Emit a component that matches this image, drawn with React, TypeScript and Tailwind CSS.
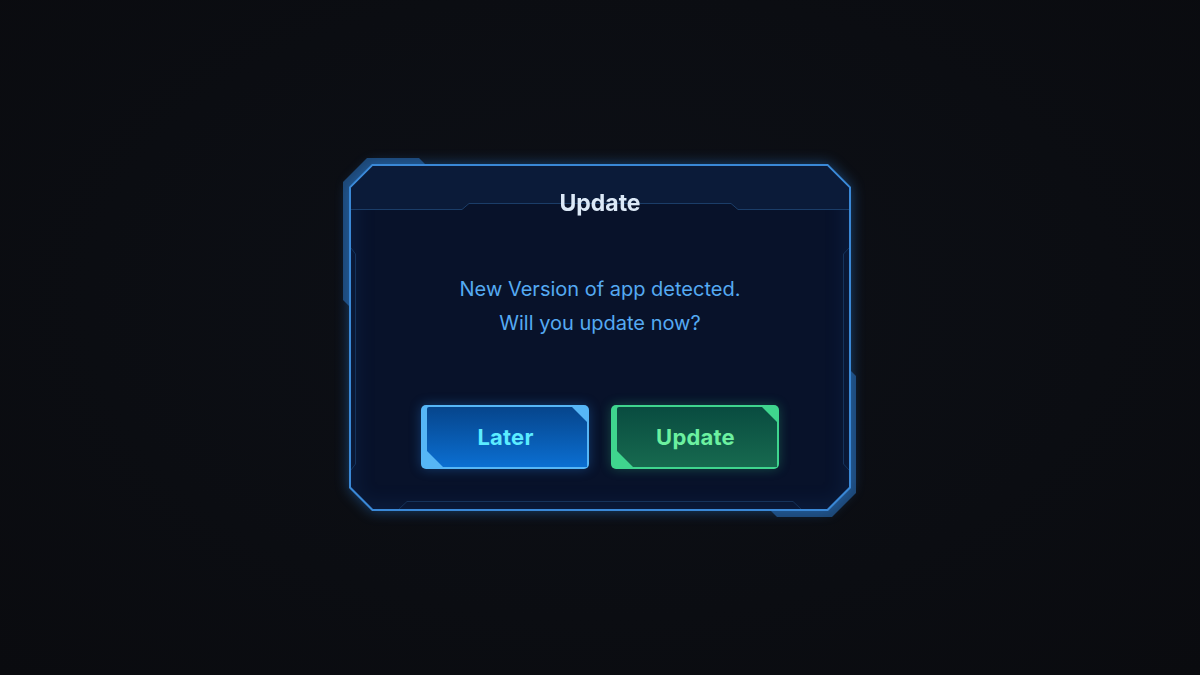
import React from "react";

const font = { fontFamily: "Inter, 'Noto Sans', sans-serif" };

interface FrameButtonProps {
    label: string;
    variant: "blue" | "green";
}

// Chamfered game-style button: accent shell with a clipped gradient fill on top
function FrameButton({ label, variant }: FrameButtonProps) {
    const blue = variant === "blue";
    return (
        <button
            className={
                "w-[168px] h-[64px] rounded-[5px] pl-[6px] pt-[2px] pr-[2px] pb-[2px] " +
                (blue
                    ? "bg-[#56b6f6] shadow-[0_0_12px_rgba(40,140,240,0.35)]"
                    : "bg-[#3fd58e] shadow-[0_0_12px_rgba(50,210,140,0.3)]")
            }
        >
            <div
                className={
                    "h-full w-full flex items-center justify-center rounded-tl-[2px] [clip-path:polygon(0_0,145px_0,160px_15px,160px_60px,16px_60px,0_44px)] " +
                    (blue
                        ? "bg-gradient-to-b from-[#06458c] to-[#0b6fd2]"
                        : "bg-gradient-to-b from-[#094c40] to-[#176a4f]")
                }
            >
                <span
                    className={
                        "text-[22px] font-bold leading-none tracking-[0.2px] -ml-[3px] " +
                        (blue ? "text-[#5cecff]" : "text-[#6cf0a0]")
                    }
                >
                    {label}
                </span>
            </div>
        </button>
    );
}

export default function App() {
    return (
        <div
            className="h-screen w-full flex items-center justify-center bg-[#0b0d12] bg-[radial-gradient(ellipse_at_50%_45%,#0d1017_0%,#0b0d12_60%,#0a0b0f_100%)]"
            style={font}
        >
            <div className="relative w-[502px] h-[347px]">
                {/* Back plates peeking out behind the frame */}
                <div className="absolute left-[-6px] top-[-6px] w-[82px] h-[148px] bg-[#1c4572] [clip-path:polygon(24px_0,76px_0,82px_6px,82px_148px,6px_148px,0_142px,0_24px)]" />
                <div className="absolute left-[422px] top-[206px] w-[85px] h-[147px] bg-[#1c4572] [clip-path:polygon(79px_0,85px_6px,85px_123px,61px_147px,6px_147px,0_141px,0_0)]" />

                {/* Main frame */}
                <div className="relative h-full drop-shadow-[0_0_7px_rgba(45,130,225,0.45)]">
                    <div className="h-full p-[2px] bg-[#3a88d6] [clip-path:polygon(23px_0,479px_0,502px_23px,502px_324px,479px_347px,23px_347px,0_324px,0_23px)]">
                        <div className="relative h-full flex flex-col bg-[#08122a] [clip-path:polygon(22px_0,476px_0,498px_22px,498px_321px,476px_343px,22px_343px,0_321px,0_22px)] shadow-[inset_0_0_24px_rgba(40,110,210,0.18)]">
                            {/* faint inner trim lines */}
                            <svg
                                className="absolute inset-0 pointer-events-none"
                                width="498"
                                height="343"
                                viewBox="0 0 498 343"
                                fill="none"
                            >
                                <path d="M48 0 L56 7.5 H442 L450 0" stroke="#1a3f6b" strokeWidth="1" />
                                <path d="M48 343 L56 335.5 H442 L450 343" stroke="#153259" strokeWidth="1" />
                                <path d="M0 82 L4.5 88 V298 L0 304" stroke="#14335c" strokeWidth="1" />
                                <path d="M498 82 L492.5 88 V298 L498 304" stroke="#14335c" strokeWidth="1" />
                            </svg>

                            {/* Header */}
                            <div className="relative h-[43px] shrink-0 bg-[#0b1b39] flex items-end justify-center">
                                <svg
                                    className="absolute left-0 bottom-[-1px]"
                                    width="498"
                                    height="8"
                                    viewBox="0 0 498 8"
                                    fill="none"
                                >
                                    <path d="M111 8 L118 1.5 H380 L387 8 Z" fill="#08122a" />
                                    <path d="M0 7.5 H111 L118 1.5 H380 L387 7.5 H498" stroke="#1b3d68" strokeWidth="1" />
                                </svg>
                                <h2 className="relative z-10 mb-[-6px] text-[23px] font-bold leading-none text-[#dce9f7]">
                                    Update
                                </h2>
                            </div>

                            {/* Body */}
                            <div className="flex-1 flex flex-col items-center pt-[63px]">
                                <p className="text-[20px] leading-[34px] text-center text-[#55aaf2]">
                                    New Version of app detected.
                                    <br />
                                    Will you update now?
                                </p>
                                <div className="mt-[65px] flex gap-[22px]">
                                    <FrameButton label="Later" variant="blue" />
                                    <FrameButton label="Update" variant="green" />
                                </div>
                            </div>
                        </div>
                    </div>
                </div>
            </div>
        </div>
    );
}
